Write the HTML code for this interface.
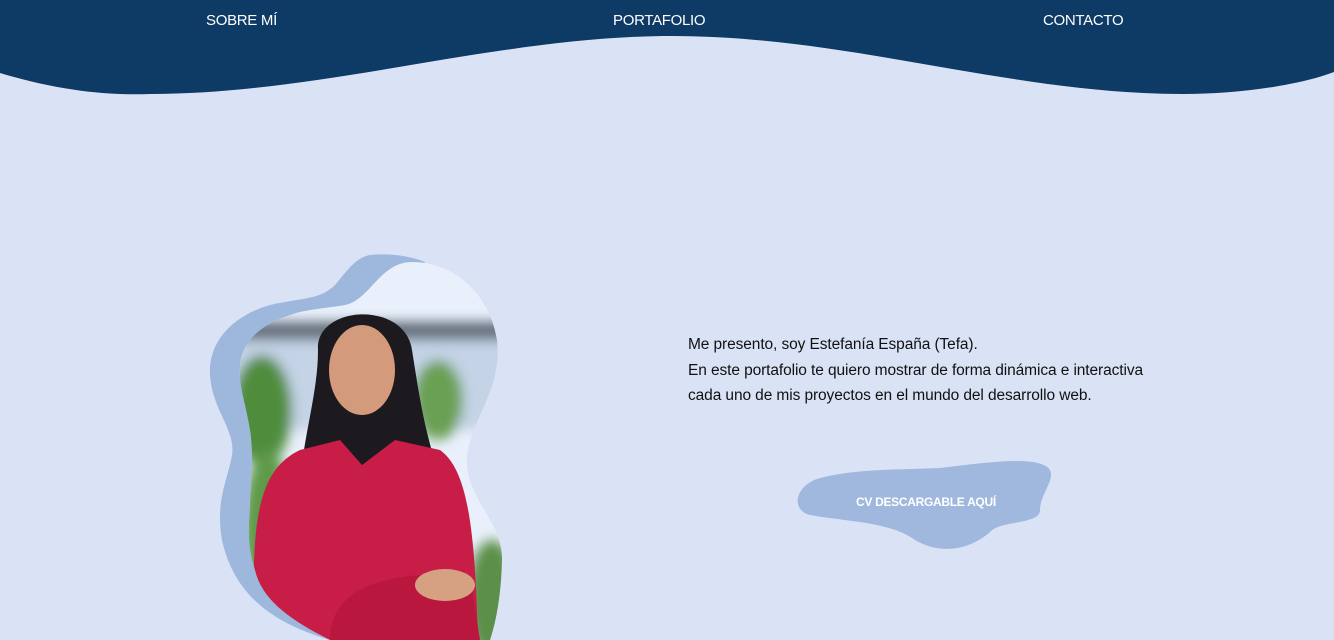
<!DOCTYPE html>
<html><head><meta charset="utf-8"><style>
html,body{margin:0;padding:0;width:1334px;height:640px;overflow:hidden;background:#dae3f5;font-family:"Liberation Sans",sans-serif}
.nav{position:absolute;top:12px;color:#fff;font-size:15px;letter-spacing:-0.3px}
.txt{position:absolute;left:688px;top:332px;font-size:15.5px;line-height:25.5px;color:#111;letter-spacing:-0.1px}
.btn{position:absolute;left:856px;top:495px;color:#fff;font-size:12px;font-weight:bold;letter-spacing:-0.3px}
</style></head><body>
<svg width="1334" height="640" style="position:absolute;left:0;top:0">
<defs>
<clipPath id="c"><path d="M345 305 C370 300 380 262 412 262 C455 262 490 295 497 340 C503 390 470 420 467 457 C465 500 503 520 502 560 C501 600 495 625 490 640 L330 640 C290 620 262 600 255 570 C245 540 250 520 250 500 C252 470 253 450 250 430 C245 400 238 385 240 365 C243 335 270 320 300 312 C320 308 335 307 345 305Z"/></clipPath>
<filter id="b"><feGaussianBlur stdDeviation="6"/></filter>
</defs>
<path d="M0 73 C50 88 100 96 150 94 C324 94 498 36 672 36 C850 36 1010 94 1183 94 C1240 94 1300 85 1334 72 V0 H0Z" fill="#0e3a66"/>
<path d="M370 255 C390 253 410 256 425 262 L400 300 L380 640 L330 640 C280 625 235 600 222 540 C215 500 228 480 232 455 C236 430 212 410 210 375 C208 340 235 315 270 305 C300 298 320 300 335 285 C348 270 355 258 370 255Z" fill="#9db7dd"/>
<g clip-path="url(#c)">
<rect x="230" y="255" width="280" height="390" fill="#e9f0fb"/>
<g filter="url(#b)">
<rect x="230" y="322" width="280" height="18" fill="#5f6b76"/>
<rect x="230" y="340" width="280" height="90" fill="#c4d3e6"/>
<ellipse cx="262" cy="410" rx="30" ry="55" fill="#4f8d3d"/>
<ellipse cx="268" cy="530" rx="25" ry="80" fill="#5f9a48"/>
<ellipse cx="438" cy="400" rx="25" ry="40" fill="#6aa052"/>
<ellipse cx="492" cy="600" rx="25" ry="60" fill="#5b8f4a"/>
</g>
<path d="M318 350 C315 305 405 300 412 350 C420 400 425 440 450 505 L300 505 C298 450 318 400 318 350Z" fill="#1d1a1f"/>
<ellipse cx="362" cy="370" rx="33" ry="45" fill="#d39a7c"/>
<path d="M255 640 C250 520 258 470 300 450 L340 440 L362 465 L395 440 L440 450 C468 470 475 530 478 640Z" fill="#c81d47"/>
<path d="M330 640 C330 590 380 570 470 575 L480 640Z" fill="#b9173d"/>
<ellipse cx="445" cy="585" rx="30" ry="16" fill="#d6a183"/>
</g>
<path d="M820 478 C860 468 900 470 940 468 C990 462 1040 455 1050 470 C1055 480 1040 495 1040 510 C1040 525 1000 520 990 532 C970 550 940 555 915 540 C890 522 850 522 810 515 C790 510 795 485 820 478Z" fill="#a0b7de"/>
</svg>
<div class="nav" style="left:206px">SOBRE MÍ</div>
<div class="nav" style="left:613px">PORTAFOLIO</div>
<div class="nav" style="left:1043px">CONTACTO</div>
<div class="txt">Me presento, soy Estefanía España (Tefa).<br>En este portafolio te quiero mostrar de forma dinámica e interactiva<br>cada uno de mis proyectos en el mundo del desarrollo web.</div>
<div class="btn">CV DESCARGABLE AQUÍ</div>
</body></html>
